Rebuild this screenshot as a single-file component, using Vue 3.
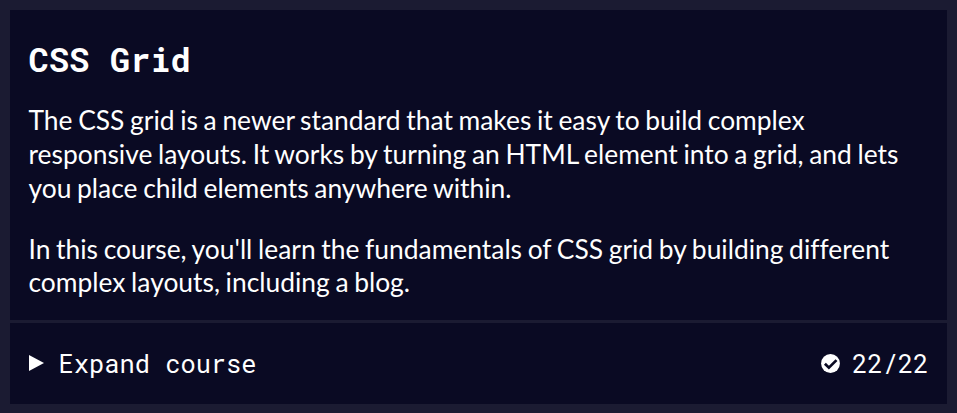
<script setup>
const paragraphs = [
  ['The CSS grid is a newer standard that makes it easy to build complex', 'responsive layouts. It works by turning an HTML element into a grid, and lets', 'you place child elements anywhere within.'],
  ["In this course, you'll learn the fundamentals of CSS grid by building different", 'complex layouts, including a blog.'],
]
</script>

<template>
  <main class="page">
    <section class="intro">
      <h2 class="title">CSS Grid</h2>
      <p v-for="(lines, i) in paragraphs" :key="i" class="text">
        <span v-for="line in lines" :key="line" class="line">{{ line }}</span>
      </p>
    </section>
    <button class="toggle" type="button">
      <svg class="arrow" viewBox="0 0 15 16"><path d="M0 0L15 8L0 16Z" fill="#fff" /></svg>
      <span class="label">Expand course</span>
      <svg class="check" viewBox="0 0 19 19"><circle cx="9.5" cy="9.5" r="9.4" fill="#fff" /><path d="M3.9 9.7L7.9 13.7L15.5 6.1" fill="none" stroke="#0a0a23" stroke-width="2.7" /></svg>
      <span>22/22</span>
    </button>
  </main>
</template>

<style>
body {
  margin: 0;
  background: #1b1b32;
}
</style>

<style scoped>
.page {
  box-sizing: border-box;
  width: 957px;
  height: 413px;
  padding: 10px 10px 9px;
  display: flex;
  flex-direction: column;
  gap: 3px;
  background: #1b1b32;
  color: #fff;
}
.intro {
  box-sizing: border-box;
  height: 310px;
  padding: 29px 18.5px 0;
  background: #0a0a23;
}
.title {
  margin: 0 0 25.4px;
  font: 700 33.8px/40px "Roboto Mono", "DejaVu Sans Mono", monospace;
}
.text {
  margin: 0 0 27px;
  font: 400 26.4px/33.75px Lato, sans-serif;
  font-variant-ligatures: none;
  word-spacing: -1.1px;
}
.line {
  display: block;
  white-space: nowrap;
}
.toggle {
  box-sizing: border-box;
  flex: 1;
  display: flex;
  align-items: center;
  border: 0;
  padding: 0 18.5px 2px 19px;
  background: #0a0a23;
  color: #fff;
  font: 400 25.4px/34px "Roboto Mono", "DejaVu Sans Mono", monospace;
}
.arrow {
  width: 15px;
  height: 16px;
  margin-right: 14.5px;
}
.label {
  margin-right: auto;
}
.check {
  width: 19px;
  height: 19px;
  margin-top: 2px;
  margin-right: 12px;
}
</style>
